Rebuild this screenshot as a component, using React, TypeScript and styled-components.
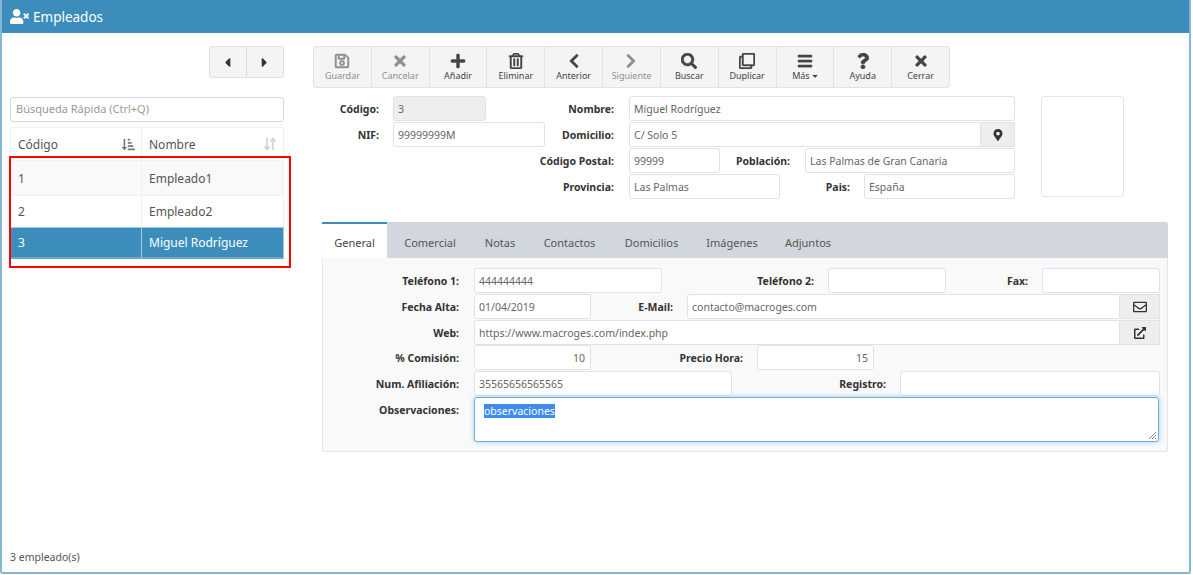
import React from "react";
import styled, { createGlobalStyle } from "styled-components";
import {
  FaUserTimes, FaCaretLeft, FaCaretRight, FaRegSave, FaTimes, FaPlus, FaRegTrashAlt,
  FaChevronLeft, FaChevronRight, FaSearch, FaRegClone, FaBars, FaQuestion, FaCaretDown,
  FaMapMarkerAlt, FaRegEnvelope, FaExternalLinkAlt, FaSortAmountDownAlt,
} from "react-icons/fa";

const Global = createGlobalStyle`
  html, body { margin: 0; padding: 0; background: #fff; }
  body { font-family: "Noto Sans", "Open Sans", sans-serif; color: #444; }
  * { box-sizing: border-box; }
`;

const Frame = styled.div`
  width: 1191px; height: 574px; display: flex; flex-direction: column;
  border: 2px solid #85b6d4; border-top: 0; border-radius: 0 0 3px 3px; overflow: hidden;
`;
const Header = styled.header`
  height: 33px; margin-left: -2px; margin-right: -2px; background: #3c8dbc; color: #fff; display: flex; align-items: center;
  gap: 4px; padding-left: 10px; font-size: 13.5px; flex-shrink: 0; border-radius: 3px 3px 0 0;
`;
const Body = styled.main`
  flex: 1; display: flex; padding: 13px 0 0 8px; position: relative;
`;
const Aside = styled.aside`
  width: 274px; flex-shrink: 0; display: flex; flex-direction: column;
`;
const NavGroup = styled.div`
  align-self: flex-end; display: flex; height: 32px; width: 75px; margin-bottom: 19px;
  border: 1px solid #e0e0e0; border-radius: 3px; background: #f4f4f4; color: #333;
`;
const NavButton = styled.div`
  flex: 1; display: flex; align-items: center; justify-content: center; font-size: 15px; padding-right: 2px;
  & + & { border-left: 1px solid #ddd; }
`;
const SearchBox = styled.div`
  height: 25px; border: 1px solid #d2d6de; border-radius: 3px; padding: 0 0 2px 5px; font-size: 11px;
  color: #999; display: flex; align-items: center; margin-bottom: 5px;
`;
const Table = styled.div`
  display: grid; grid-template-columns: 132px 142px; font-size: 12px;
`;
const Cell = styled.div<{ $bg?: string; $fg?: string; $h: number }>`
  height: ${p => p.$h}px; padding: 0 6px 0 7px; display: flex; align-items: center; justify-content: space-between;
  background: ${p => p.$bg || "#fff"}; color: ${p => p.$fg || "#555"};
  border-top: 1px solid #f1f1f1; border-right: 1px solid #f1f1f1;
  &:nth-child(2n+1) { border-left: 1px solid #f1f1f1; }
`;
const SelCell = styled(Cell)`
  border-color: #a5c9df; border-bottom: 2px solid #6aa6cb;
`;
const Mark = styled.div`
  position: absolute; left: 7px; top: 123px; width: 282px; height: 112px; border: 2px solid #f00; pointer-events: none;
`;
const Main = styled.section`
  margin-left: 29px; flex: 1; display: flex; flex-direction: column;
`;
const Toolbar = styled.nav`
  display: flex; width: 637px; height: 42px; border: 1px solid #e2e2e2; border-radius: 3px; background: #f4f4f4; margin-bottom: 8px;
`;
const Tool = styled.div<{ $off?: boolean }>`
  flex: 1; display: flex; flex-direction: column; align-items: center; justify-content: flex-start; padding-top: 6px;
  color: ${p => (p.$off ? "#8e8e8e" : "#444")}; font-size: 9px; line-height: 12px; gap: 1px;
  & + & { border-left: 1px solid #e2e2e2; }
  svg { height: 16px; width: 16px; stroke: currentColor; stroke-width: 14; }
  svg.small { height: 8px; width: 6px; }
`;
const ToolLabel = styled.span`
  display: flex; align-items: center; gap: 2px;
`;
const TopForm = styled.form`
  display: flex; height: 126px;
`;
const Col = styled.div<{ $w: number }>`
  width: ${p => p.$w}px; display: flex; flex-direction: column; gap: 1px;
`;
const Row = styled.div<{ $h?: number }>`
  display: flex; height: ${p => p.$h || 25}px; flex-shrink: 0;
`;
const Label = styled.label<{ $w: number; $gap?: number }>`
  width: ${p => p.$w}px; margin-right: ${p => p.$gap ?? 14}px; flex-shrink: 0; display: flex; justify-content: flex-end;
  align-items: center; white-space: nowrap; font-weight: 700; font-size: 10.5px; color: #333; height: 25px;
`;
const Input = styled.div<{ $w?: number; $off?: boolean; $right?: boolean; $joined?: boolean }>`
  ${p => (p.$w ? `width:${p.$w}px;` : "flex:1;")} height: 25px; flex-shrink: 0; border: 1px solid #dfe2e8;
  border-radius: ${p => (p.$joined ? "3px 0 0 3px" : "3px")};
  background: ${p => (p.$off ? "#eee" : "#fff")}; color: #666; font-size: 10.5px; padding: 0 5px 0 4px; display: flex; align-items: center;
  justify-content: ${p => (p.$right ? "flex-end" : "flex-start")}; white-space: nowrap;
`;
const Addon = styled.div<{ $w: number }>`
  width: ${p => p.$w}px; height: 25px; flex-shrink: 0; background: #eee; border: 1px solid #dfe2e8; border-left: 0;
  display: flex; align-items: center; justify-content: center; color: #333; font-size: 12px;
`;
const Photo = styled.div`
  width: 83px; height: 101px; margin-left: 26px; border: 1px solid #e3e5ea; border-radius: 3px;
`;
const Panel = styled.div`
  margin: 0 0 0 9px; width: 846px; height: 230px; background: #f9f9f9; border: 1px solid #e4e6ea; border-top: 0; border-radius: 3px;
  display: flex; flex-direction: column;
`;
const TabBar = styled.div`
  height: 36px; background: #d2d6de; display: flex; font-size: 11px; color: #555; border-radius: 3px 3px 0 0; margin: 0 -1px; flex-shrink: 0;
`;
const Tab = styled.div<{ $active?: boolean; $w: number }>`
  width: ${p => p.$w}px; display: flex; align-items: center; justify-content: center; padding-top: 4px;
  ${p => p.$active ? "background:#fff;border-top:2px solid #3c8dbc;color:#444;padding-top:2px;" : ""}
`;
const TabBody = styled.div`
  padding-top: 10px; display: flex; flex-direction: column; gap: 1px;
`;
const Notes = styled.div`
  flex: 1; height: 45px; margin-right: 8px; border: 1px solid #6fb0d6; border-radius: 3px; background: #fff; font-size: 10.5px;
  padding: 6px 9px; color: #222; box-shadow: 0 0 5px rgba(102,175,233,.6); position: relative;
`;
const Selected = styled.span`
  background: #3f8cf0; color: #fff;
`;
const Grip = styled.svg`
  position: absolute; right: 1px; bottom: 1px; width: 9px; height: 9px;
`;
const Footer = styled.footer`
  height: 34px; padding: 0 0 8px 8px; font-size: 10.5px; color: #555; display: flex; align-items: flex-end; flex-shrink: 0;
`;

const SortIcon = () => (
  <svg width="14" height="14" viewBox="0 0 14 14" fill="none" stroke="#d0d0d0" strokeWidth="1.6">
    <path d="M4 1v11M1.5 9.5L4 12.5 6.500 9.500M10 13V2M7.500 4.500L10 1.500 12.500 4.500" />
  </svg>
);

const tools = [
  { label: "Guardar", icon: <FaRegSave />, off: true },
  { label: "Cancelar", icon: <FaTimes />, off: true },
  { label: "Añadir", icon: <FaPlus /> },
  { label: "Eliminar", icon: <FaRegTrashAlt /> },
  { label: "Anterior", icon: <FaChevronLeft /> },
  { label: "Siguiente", icon: <FaChevronRight />, off: true },
  { label: "Buscar", icon: <FaSearch /> },
  { label: "Duplicar", icon: <FaRegClone /> },
  { label: "Más", icon: <FaBars />, caret: true },
  { label: "Ayuda", icon: <FaQuestion /> },
  { label: "Cerrar", icon: <FaTimes /> },
];
const tabs: [string, number][] = [["General", 65], ["Comercial", 86], ["Notas", 54], ["Contactos", 85], ["Domicilios", 79], ["Imágenes", 82], ["Adjuntos", 70]];

export default function App() {
  return (
    <>
      <Global />
      <Frame>
        <Header><FaUserTimes size={19} />Empleados</Header>
        <Body>
          <Aside>
            <NavGroup>
              <NavButton><FaCaretLeft /></NavButton>
              <NavButton><FaCaretRight /></NavButton>
            </NavGroup>
            <SearchBox>Búsqueda Rápida (Ctrl+Q)</SearchBox>
            <Table>
              <Cell $h={33}>Código<FaSortAmountDownAlt size={13} color="#777" /></Cell>
              <Cell $h={33}>Nombre<SortIcon /></Cell>
              <Cell $h={35} $bg="#f9f9f9">1</Cell>
              <Cell $h={35} $bg="#f9f9f9">Empleado1</Cell>
              <Cell $h={32}>2</Cell>
              <Cell $h={32}>Empleado2</Cell>
              <SelCell $h={32} $bg="#3c8dbc" $fg="#fff">3</SelCell>
              <SelCell $h={32} $bg="#3c8dbc" $fg="#fff">Miguel Rodríguez</SelCell>
            </Table>
          </Aside>
          <Mark />
          <Main>
            <Toolbar>
              {tools.map(t => (
                <Tool key={t.label} $off={t.off}>
                  {t.icon}
                  <ToolLabel>{t.label}{t.caret && <FaCaretDown className="small" />}</ToolLabel>
                </Tool>
              ))}
            </Toolbar>
            <TopForm>
              <Col $w={232}>
                <Row><Label $w={66}>Código:</Label><Input $w={93} $off>3</Input></Row>
                <Row><Label $w={66}>NIF:</Label><Input $w={152}>99999999M</Input></Row>
              </Col>
              <Col $w={470}>
                <Row><Label $w={69} $gap={15}>Nombre:</Label><Input>Miguel Rodríguez</Input></Row>
                <Row><Label $w={69} $gap={15}>Domicilio:</Label><Input $joined>C/ Solo 5</Input><Addon $w={34}><FaMapMarkerAlt /></Addon></Row>
                <Row><Label $w={69} $gap={15}>Código Postal:</Label><Input $w={91}>99999</Input><Label $w={70} $gap={15}>Población:</Label><Input>Las Palmas de Gran Canaria</Input></Row>
                <Row><Label $w={69} $gap={15}>Provincia:</Label><Input $w={151}>Las Palmas</Input><Label $w={70}>Pais:</Label><Input>España</Input></Row>
              </Col>
              <Photo />
            </TopForm>
            <Panel>
              <TabBar>
                {tabs.map(([t, w], i) => <Tab key={t} $w={w} $active={i === 0}>{t}</Tab>)}
              </TabBar>
              <TabBody>
                <Row><Label $w={136} $gap={15}>Teléfono 1:</Label><Input $w={188}>444444444</Input><Label $w={152}>Teléfono 2:</Label><Input $w={118} /><Label $w={82}>Fax:</Label><Input $w={118} /></Row>
                <Row><Label $w={136} $gap={15}>Fecha Alta:</Label><Input $w={117}>01/04/2019</Input><Label $w={82}>E-Mail:</Label><Input $w={433} $joined>contacto@macroges.com</Input><Addon $w={40}><FaRegEnvelope size={14} /></Addon></Row>
                <Row $h={24}><Label $w={136} $gap={15}>Web:</Label><Input $w={646} $joined>https://www.macroges.com/index.php</Input><Addon $w={40}><FaExternalLinkAlt size={12} /></Addon></Row>
                <Row><Label $w={136} $gap={15}>% Comisión:</Label><Input $w={117} $right>10</Input><Label $w={152}>Precio Hora:</Label><Input $w={117} $right>15</Input></Row>
                <Row><Label $w={136} $gap={15}>Num. Afiliación:</Label><Input $w={258}>35565656565565</Input><Label $w={154}>Registro:</Label><Input $w={260} /></Row>
                <Row $h={45}>
                  <Label $w={136} $gap={15}>Observaciones:</Label>
                  <Notes>
                    <Selected>observaciones</Selected>
                    <Grip viewBox="0 0 9 9" stroke="#888" strokeWidth="1"><path d="M1 8L8 1M4 8L8 4M7 8L8 7" /></Grip>
                  </Notes>
                </Row>
              </TabBody>
            </Panel>
          </Main>
        </Body>
        <Footer>3 empleado(s)</Footer>
      </Frame>
    </>
  );
}
